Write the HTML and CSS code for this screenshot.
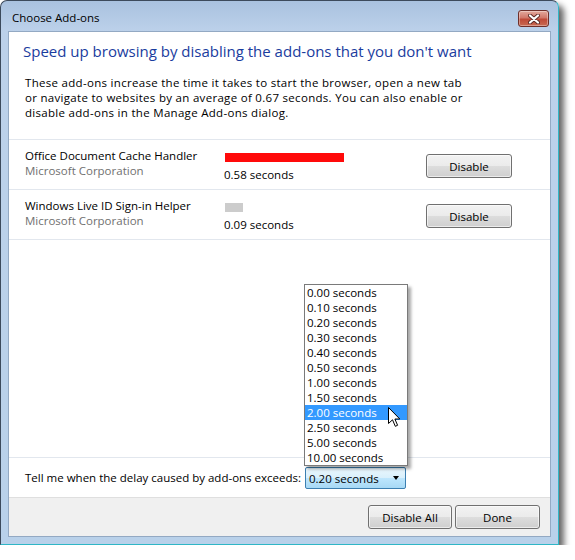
FILE: index.html
```html
<!DOCTYPE html>
<html>
<head>
<meta charset="utf-8">
<link rel="stylesheet" href="styles.css">
</head>
<body>
<div class="window">
  <div class="titlebar">
    <span class="title">Choose Add-ons</span>
    <div class="close">
      <svg width="12" height="10" viewBox="0 0 12 10">
        <path d="M2 1.5 L10 8.5 M10 1.5 L2 8.5" stroke="#5a2a26" stroke-width="4" stroke-linecap="round"/>
        <path d="M2 1.5 L10 8.5 M10 1.5 L2 8.5" stroke="#ffffff" stroke-width="2.2" stroke-linecap="round"/>
      </svg>
    </div>
  </div>
  <div class="client">
    <h1 class="instruction">Speed up browsing by disabling the add-ons that you don't want</h1>
    <p class="desc">These add-ons increase the time it takes to start the browser, open a new tab<br>or navigate to websites by an average of 0.67 seconds. You can also enable or<br>disable add-ons in the Manage Add-ons dialog.</p>
    <ul class="addons">
      <li class="addon">
        <div class="addon-info">
          <div class="addon-name">Office Document Cache Handler</div>
          <div class="addon-company">Microsoft Corporation</div>
        </div>
        <div class="addon-time">
          <div class="bar bar-slow" style="width:119px"></div>
          <div class="time-text">0.58 seconds</div>
        </div>
        <button class="btn btn-row">Disable</button>
      </li>
      <li class="addon">
        <div class="addon-info">
          <div class="addon-name">Windows Live ID Sign-in Helper</div>
          <div class="addon-company">Microsoft Corporation</div>
        </div>
        <div class="addon-time">
          <div class="bar bar-fast" style="width:18px"></div>
          <div class="time-text">0.09 seconds</div>
        </div>
        <button class="btn btn-row">Disable</button>
      </li>
    </ul>
    <div class="spacer"></div>
    <div class="threshold">
      <span class="threshold-label">Tell me when the delay caused by add-ons exceeds:</span>
      <div class="combo">
        <span class="combo-value">0.20 seconds</span>
        <span class="combo-arrow"></span>
      </div>
    </div>
    <div class="footer">
      <button class="btn btn-disable-all">Disable All</button>
      <button class="btn btn-done">Done</button>
    </div>
  </div>
  <ul class="dropdown">
    <li>0.00 seconds</li>
    <li>0.10 seconds</li>
    <li>0.20 seconds</li>
    <li>0.30 seconds</li>
    <li>0.40 seconds</li>
    <li>0.50 seconds</li>
    <li>1.00 seconds</li>
    <li>1.50 seconds</li>
    <li class="selected">2.00 seconds</li>
    <li>2.50 seconds</li>
    <li>5.00 seconds</li>
    <li>10.00 seconds</li>
  </ul>
  <svg class="cursor" width="13" height="21" viewBox="0 0 13 21">
    <path d="M0.5 0.5 L0.5 16.5 L4.5 12.8 L7.3 19.3 L9.6 18.3 L6.9 12 L11.8 12 Z" fill="#ffffff" stroke="#000000" stroke-width="1" stroke-linejoin="miter"/>
  </svg>
</div>
</body>
</html>
```

FILE: styles.css
```css
* { box-sizing: border-box; }
html, body { margin: 0; padding: 0; background: #ffffff; }
body {
  font-family: "Open Sans", "Noto Sans", sans-serif;
  font-size: 11.5px;
  color: #1a1a1a;
}
.window {
  position: relative;
  width: 559px;
  height: 545px;
  border: 1px solid #3c4a5c;
  border-right-color: #2fb6c6;
  border-bottom-color: #2fb6c6;
  border-radius: 7px 7px 0 0;
  background: linear-gradient(to bottom, #a9c2df 0px, #bcd1ea 30px, #b9d1ea 100%);
  box-shadow: 5px 5px 6px rgba(0,0,0,0.6);
  padding: 0 7px 7px 7px;
  display: flex;
  flex-direction: column;
}
.titlebar {
  height: 30px;
  display: flex;
  align-items: flex-start;
  justify-content: space-between;
  padding-left: 4px;
}
.title {
  margin-top: 9px;
  font-size: 11.5px;
  color: #000000;
  line-height: 16px;
}
.close {
  margin-top: 9px;
  margin-right: 2px;
  width: 31px;
  height: 17px;
  border: 1px solid #6e2f2a;
  border-radius: 3px;
  background: linear-gradient(to bottom, #e3a99d 0%, #d1786a 45%, #bf4a38 55%, #c96a52 100%);
  display: flex;
  align-items: center;
  justify-content: center;
  box-shadow: inset 0 0 0 1px rgba(255,255,255,0.35);
}
.client {
  flex: 1;
  background: #ffffff;
  border: 1px solid #93a9c3;
  display: flex;
  flex-direction: column;
  min-height: 0;
}
.instruction {
  margin: 9px 0 0 14px;
  font-weight: normal;
  font-size: 15px;
  line-height: 20px;
  color: #1a3c9e;
}
.desc {
  margin: 14px 0 0 16px;
  line-height: 15px;
  letter-spacing: 0.3px;
  color: #000000;
}
.addons {
  list-style: none;
  margin: 19px 0 0 0;
  padding: 0;
  border-bottom: 1px solid #e2e7ee;
}
.addon {
  height: 50px;
  border-top: 1px solid #e2e7ee;
  display: grid;
  grid-template-columns: 199px 1fr 86px;
  padding: 0 38px 0 16px;
  align-items: start;
}
.addon-info { padding-top: 8px; line-height: 15px; }
.addon-name { color: #000000; }
.addon-company { color: #707070; }
.addon-time { padding-top: 13px; }
.bar { height: 9px; margin-left: 1px; }
.bar-slow { background: #ff0a0a; }
.bar-fast { background: #cccccc; }
.time-text { margin-top: 5px; line-height: 15px; color: #000000; }
.btn {
  font-family: inherit;
  font-size: 11.5px;
  color: #000000;
  height: 24px;
  border: 1px solid #707070;
  border-radius: 3px;
  background: linear-gradient(to bottom, #f2f2f2 0%, #ebebeb 50%, #dddddd 51%, #cfcfcf 100%);
  box-shadow: inset 0 0 0 1px rgba(255,255,255,0.6);
  padding: 0;
}
.btn-row { margin-top: 14px; width: 86px; }
.spacer { flex: 1; }
.threshold {
  height: 40px;
  border-top: 1px solid #e2e7ee;
  display: flex;
  align-items: center;
  padding-left: 16px;
}
.threshold-label { width: 280px; color: #000000; }
.combo {
  width: 101px;
  height: 22px;
  border: 1px solid #3c7fb1;
  border-radius: 2px;
  background: linear-gradient(to bottom, #eaf6fd 0%, #d9f0fc 50%, #bee6fd 51%, #a7d9f5 100%);
  display: flex;
  align-items: center;
  justify-content: space-between;
  padding: 0 6px 0 3px;
  margin-top: 1px;
}
.combo-value { color: #000000; }
.combo-arrow {
  width: 0;
  height: 0;
  border-left: 3.5px solid transparent;
  border-right: 3.5px solid transparent;
  border-top: 4px solid #000000;
}
.footer {
  height: 39px;
  border-top: 1px solid #dfdfdf;
  background: #f0f0f0;
  display: flex;
  justify-content: flex-end;
  gap: 3px;
  padding: 7px 10px 0 0;
}
.btn-disable-all { width: 84px; }
.btn-done { width: 85px; }
.dropdown {
  position: absolute;
  left: 303px;
  top: 283px;
  width: 104px;
  margin: 0;
  padding: 0;
  list-style: none;
  background: #ffffff;
  border: 1px solid #7a7a7a;
  box-shadow: 3px 3px 3px rgba(0,0,0,0.35);
}
.dropdown li {
  height: 15px;
  line-height: 15px;
  padding-left: 2px;
  color: #000000;
}
.dropdown li.selected { background: #3399ff; color: #ffffff; }
.cursor {
  position: absolute;
  left: 387px;
  top: 406px;
}
```
